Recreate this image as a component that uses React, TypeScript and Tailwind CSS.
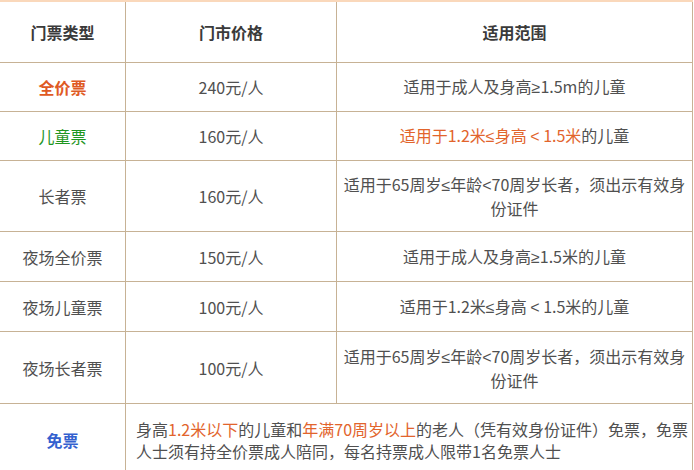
const cell = "flex items-center justify-center border-r border-b border-[#c7b295] text-center";

// narrow maths signs, as in the reference (CJK font draws them full width)
function Sym({ c }: { c: string }) {
  return <span style={{ fontFamily: '"Liberation Sans", sans-serif' }}>{c}</span>;
}

interface IRow {
  type: React.ReactNode;
  price: string;
  scope: React.ReactNode;
  h: string;
}

const elder = (
  <>
    适用于65周岁<Sym c="≤" />年龄<Sym c="<" />70周岁长者，须出示有效身
    <br />
    份证件
  </>
);

const rows: IRow[] = [
  {
    type: <span className="font-bold text-[#df5a24]">全价票</span>,
    price: "240元/人",
    scope: (
      <>
        适用于成人及身高<Sym c="≥" />1.5m的儿童
      </>
    ),
    h: "h-[49px]",
  },
  {
    type: <span className="text-[#1f961f]">儿童票</span>,
    price: "160元/人",
    scope: (
      <>
        <span className="text-[#e2642c]">
          适用于1.2米<Sym c="≤" />身高 <Sym c="<" /> 1.5米
        </span>
        的儿童
      </>
    ),
    h: "h-[49px]",
  },
  { type: "长者票", price: "160元/人", scope: elder, h: "h-[71px]" },
  {
    type: "夜场全价票",
    price: "150元/人",
    scope: (
      <>
        适用于成人及身高<Sym c="≥" />1.5米的儿童
      </>
    ),
    h: "h-[50px]",
  },
  {
    type: "夜场儿童票",
    price: "100元/人",
    scope: (
      <>
        适用于1.2米<Sym c="≤" />身高 <Sym c="<" /> 1.5米的儿童
      </>
    ),
    h: "h-[50px]",
  },
  { type: "夜场长者票", price: "100元/人", scope: elder, h: "h-[72px]" },
];

export default function App() {
  return (
    <div
      className="w-[694px] h-[470px] overflow-hidden bg-white text-[16px] leading-[22px] text-[#505050]"
      style={{ fontFamily: '"Noto Sans CJK SC", "Noto Sans", sans-serif' }}
    >
      <div className="w-[693px] grid grid-cols-[126px_211px_356px] border-t-2 border-[#fad8bb]">
        {/* header */}
        <div className={`${cell} h-[61px] font-bold text-[#3a3a3a]`}>门票类型</div>
        <div className={`${cell} h-[61px] font-bold text-[#3a3a3a]`}>门市价格</div>
        <div className={`${cell} h-[61px] font-bold text-[#3a3a3a]`}>适用范围</div>

        {rows.map((r, i) => (
          <div key={i} className="contents">
            <div className={`${cell} ${r.h}`}>{r.type}</div>
            <div className={`${cell} ${r.h}`}>{r.price}</div>
            <div className={`${cell} ${r.h}`}>
              <p className="whitespace-nowrap">{r.scope}</p>
            </div>
          </div>
        ))}

        {/* free ticket */}
        <div className={`${cell} h-[72px] font-bold text-[#3461cf]`}>免票</div>
        <div className="col-span-2 h-[72px] flex items-center border-r border-b border-[#c7b295] pl-[10px] whitespace-nowrap">
          <p>
            身高<span className="text-[#e2642c]">1.2米以下</span>的儿童和
            <span className="text-[#e2642c]">年满70周岁以上</span>
            的老人（凭有效身份证件）免票，免票
            <br />
            人士须有持全价票成人陪同，每名持票成人限带1名免票人士
          </p>
        </div>
      </div>
    </div>
  );
}
